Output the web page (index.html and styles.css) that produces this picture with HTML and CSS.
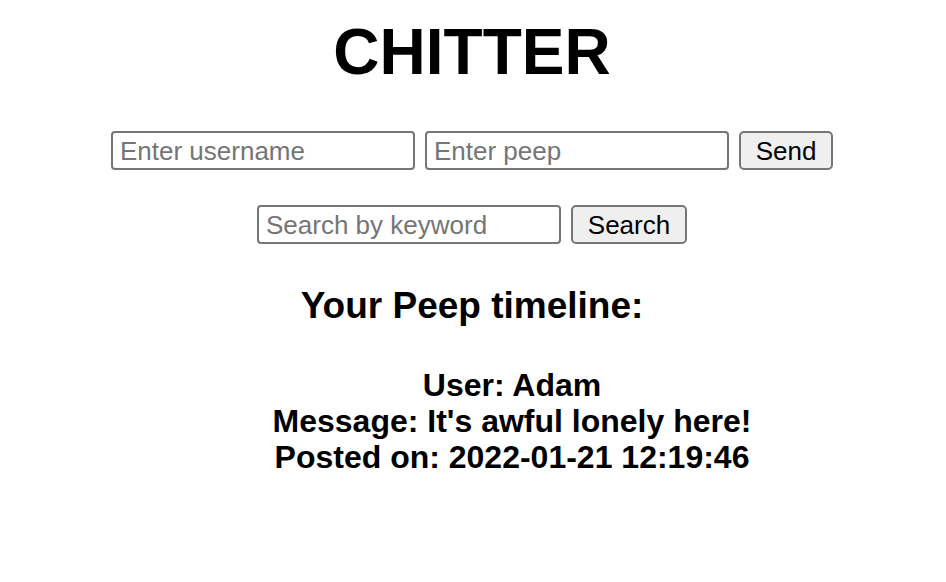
FILE: index.html
```html
<!DOCTYPE html>
<html lang="en">
<head>
<meta charset="utf-8">
<title>Chitter</title>
<link rel="stylesheet" href="styles.css">
</head>
<body>
<main class="page">
  <h1 class="title">CHITTER</h1>
  <form class="row row-post">
    <input class="field" type="text" placeholder="Enter username">
    <input class="field" type="text" placeholder="Enter peep">
    <button class="btn btn-send" type="button">Send</button>
  </form>
  <form class="row row-search">
    <input class="field" type="text" placeholder="Search by keyword">
    <button class="btn btn-search" type="button">Search</button>
  </form>
  <h2 class="timeline-title">Your Peep timeline:</h2>
  <ul class="peeps">
    <li class="peep">
      <div class="peep-line">User: Adam</div>
      <div class="peep-line">Message: It's awful lonely here!</div>
      <div class="peep-line">Posted on: 2022-01-21 12:19:46</div>
    </li>
  </ul>
</main>
</body>
</html>
```
FILE: styles.css
```css
html, body {
  margin: 0;
  padding: 0;
  background: #ffffff;
}

body {
  font-family: "Liberation Sans", Arial, Helvetica, sans-serif;
  color: #000000;
}

.page {
  display: flex;
  flex-direction: column;
  align-items: center;
  padding-right: 2px;
}

.title {
  margin: 15px 0 0;
  font-size: 64px;
  font-weight: bold;
  line-height: normal;
}

.row {
  display: flex;
  gap: 10px;
  margin: 0;
}

.row-post {
  margin-top: 42px;
}

.row-search {
  margin-top: 35px;
}

.field {
  box-sizing: border-box;
  width: 304px;
  height: 39px;
  padding: 2px 7px 0;
  border: 2px solid #767676;
  border-radius: 4px;
  font-family: "Liberation Sans", Arial, sans-serif;
  font-size: 26px;
  color: #000;
  background: #fff;
  margin: 0;
}

.field::placeholder {
  color: #757575;
}

.btn {
  box-sizing: border-box;
  height: 39px;
  padding: 2px 14px 0;
  border: 2px solid #767676;
  border-radius: 5px;
  background: #efefef;
  font-family: "Liberation Sans", Arial, sans-serif;
  font-size: 26px;
  color: #000;
  margin: 0;
}

.btn-send {
  width: 94px;
}

.btn-search {
  width: 116px;
}

.timeline-title {
  margin: 41px 0 0;
  font-size: 37px;
  font-weight: bold;
  line-height: normal;
}

.peeps {
  list-style: none;
  margin: 40px 0 0;
  padding: 0 0 0 80px;
}

.peep {
  text-align: center;
  font-size: 32px;
  font-weight: bold;
  line-height: 36px;
}
```
